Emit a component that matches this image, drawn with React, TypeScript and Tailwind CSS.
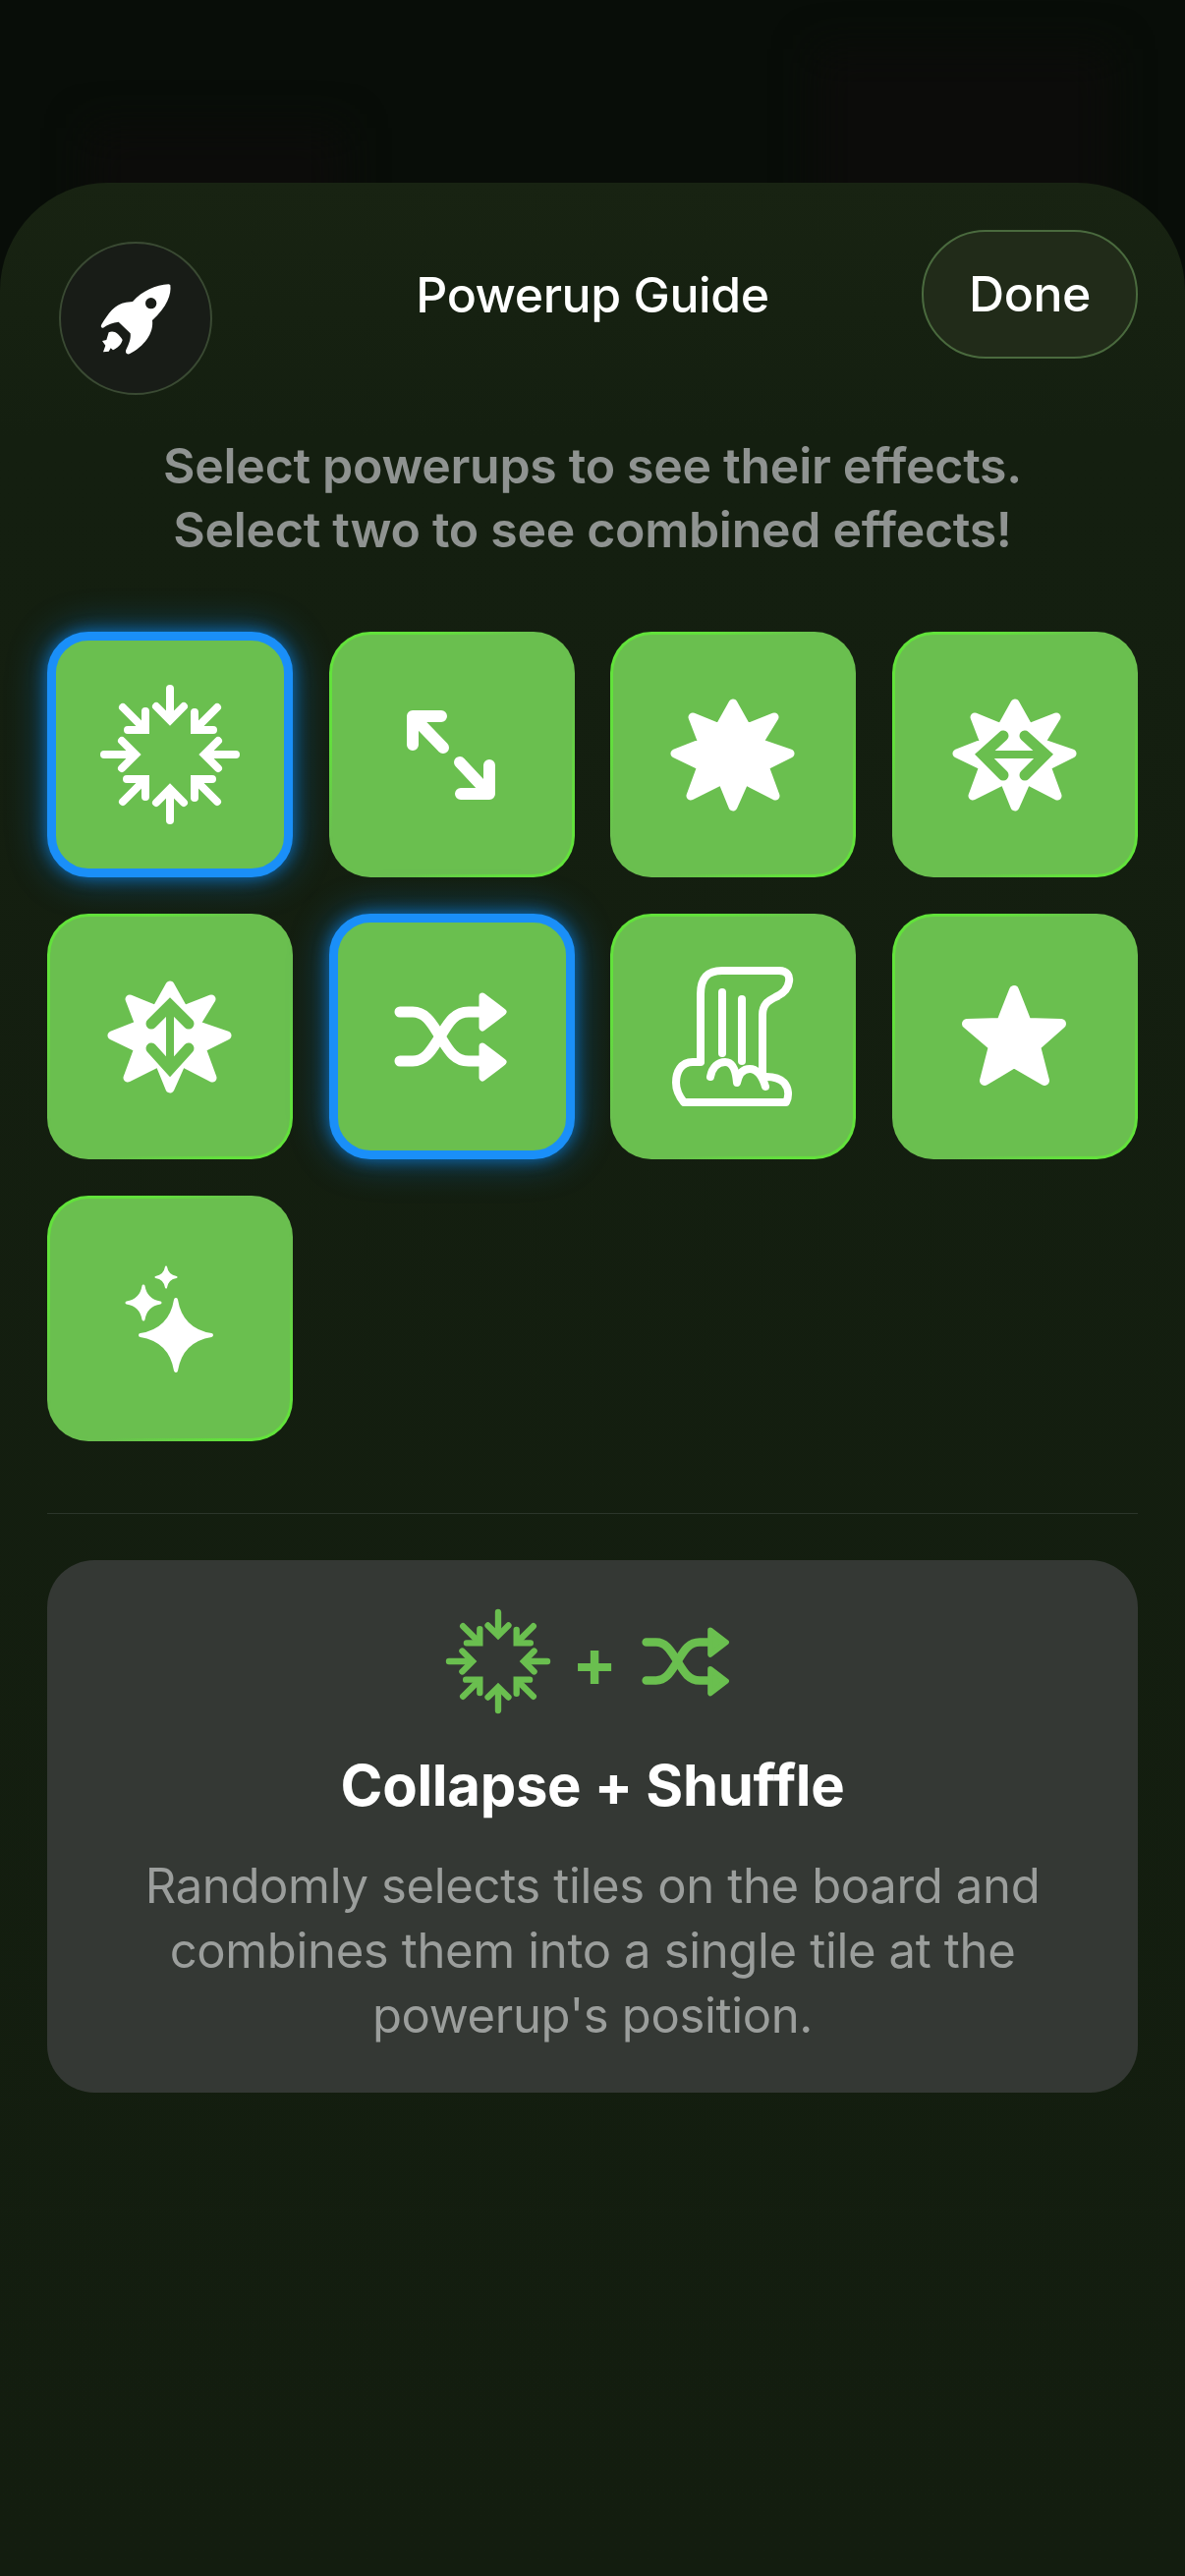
const GREEN = '#6abf4f';

function CollapseIcon({ color = 'white', viewBox = '0 0 250 250', size = 250, sw = 8 }: { color?: string; viewBox?: string; size?: number; sw?: number }) {
  return (
    <svg className="shrink-0" width={size} height={size} viewBox={viewBox} fill="none" stroke={color} strokeWidth={sw}>
      {[0, 90, 180, 270].map(a => (
        <g key={a} transform={`rotate(${a} 125 125)`}>
          <path d="M125 58V88" strokeLinecap="round" />
          <path d="M111 76L125 90L139 76" strokeLinecap="round" strokeLinejoin="miter" />
          <path d="M77 77L97 97" strokeLinecap="round" />
          <path d="M100 81V100H82" strokeLinecap="round" strokeLinejoin="miter" />
        </g>
      ))}
    </svg>
  );
}

function ExpandIcon() {
  return (
    <svg className="shrink-0" width={250} height={250} viewBox="0 0 250 250" fill="none" stroke="white" strokeWidth={12} strokeLinecap="round" strokeLinejoin="round">
      <path d="M114 86H85V115" />
      <path d="M86 87L116 118" />
      <path d="M163 136V165H134" />
      <path d="M162 164L133 133" />
    </svg>
  );
}

const STAR8 = 'M125 73L139 98L167 87L151 113L183 124L157 137L168 167L137 151L125 178L114 151L82 167L93 137L66 124L94 113L84 87L111 98Z';

function BurstIcon({ arrows }: { arrows?: 'h' | 'v' }) {
  return (
    <svg className="shrink-0" width={250} height={250} viewBox="0 0 250 250" fill="none">
      <path d={STAR8} fill="white" stroke="white" strokeWidth={9} strokeLinejoin="round" />
      {arrows === 'h' && (
        <g stroke={GREEN} strokeWidth={9} strokeLinecap="round" strokeLinejoin="miter">
          <path d="M113 106L92 125L113 146" strokeWidth={11} />
          <path d="M135 106L156 125L135 146" strokeWidth={11} />
          <path d="M94 125H154" strokeWidth={8} strokeLinecap="butt" />
        </g>
      )}
      {arrows === 'v' && (
        <g stroke={GREEN} strokeWidth={11} strokeLinecap="round" strokeLinejoin="miter">
          <path d="M106 112L125 93L144 112" />
          <path d="M106 137L125 158L144 137" />
          <path d="M125 95V156" strokeWidth={8} strokeLinecap="butt" />
        </g>
      )}
    </svg>
  );
}

function ShuffleIcon({ color = 'white', viewBox = '0 0 250 250', width = 250, height = 250 }: { color?: string; viewBox?: string; width?: number; height?: number }) {
  return (
    <svg className="shrink-0" width={width} height={height} viewBox={viewBox} fill="none" stroke={color} strokeLinecap="round">
      <path d="M72 100H85C99 100 105 113 113 125C121 138 127 150 142 150H158" strokeWidth={11} />
      <path d="M72 150H85C99 150 105 137 113 125C121 112 127 100 142 100H158" strokeWidth={11} />
      <path d="M156 84L177 100L156 116Z" fill={color} strokeWidth={7} strokeLinejoin="round" />
      <path d="M156 135L177 151L156 167Z" fill={color} strokeWidth={7} strokeLinejoin="round" />
    </svg>
  );
}

function WaterfallIcon() {
  return (
    <svg className="shrink-0" width={250} height={250} viewBox="0 0 250 250" fill="none" stroke="white" strokeWidth={8} strokeLinecap="round" strokeLinejoin="round">
      <path d="M92 150V82C92 66 98 58 114 58H172C180 58 183 63 182 69C181 78 175 82 168 85C160 89 155 93 155 103V164" />
      <path d="M114 80V142" />
      <path d="M134 87V150" />
      <path d="M92 151H84C72 151 67 161 67 172C67 180 71 187 75 192H179C182 186 182 178 177 172C172 167 166 166 159 166" />
      <path d="M102 166C104 156 110 151 117 151C125 151 128 160 129 172C131 162 136 158 142 158C150 158 155 166 158 176" />
    </svg>
  );
}

function StarIcon() {
  return (
    <svg className="shrink-0" width={250} height={250} viewBox="0 0 250 250">
      <path d="M124 78L137 111L172 112L146 135L155 170L124 152L94 170L103 135L76 112L111 111Z" fill="white" stroke="white" strokeWidth={10} strokeLinejoin="round" />
    </svg>
  );
}

function sparkle(cx: number, cy: number, r: number) {
  const c = r * 0.14;
  return `M${cx} ${cy - r}Q${cx + c} ${cy - c} ${cx + r} ${cy}Q${cx + c} ${cy + c} ${cx} ${cy + r}Q${cx - c} ${cy + c} ${cx - r} ${cy}Q${cx - c} ${cy - c} ${cx} ${cy - r}Z`;
}

function SparklesIcon() {
  return (
    <svg className="shrink-0" width={250} height={250} viewBox="0 0 250 250" fill="white" stroke="white" strokeWidth={3} strokeLinejoin="round">
      <path d={sparkle(131, 142, 36)} strokeWidth={4} />
      <path d={sparkle(98, 109, 17)} />
      <path d={sparkle(121, 83, 10.5)} strokeWidth={2} />
    </svg>
  );
}

function RocketIcon() {
  return (
    <svg className="ml-[3px] mb-[7px]" width={100} height={100} viewBox="0 0 300 300" fill="white">
      <path d="M250 57C254 85 240 125 195 165C200 205 170 245 125 268C115 270 112 262 115 255C125 235 130 220 128 205L92 170C75 172 58 178 45 188C38 190 37 183 40 178C60 145 80 115 115 110L135 108C165 75 205 57 245 55Z" />
      <path d="M62 202C78 195 92 205 104 225C100 240 88 250 75 256L68 250L62 260L45 262L52 242L42 228L55 225Z" />
      <circle cx="191" cy="113" r="17" fill="#181c17" />
    </svg>
  );
}

function Tile({ selected, children }: { selected?: boolean; children: React.ReactNode }) {
  if (selected) {
    return (
      <div className="w-[250px] h-[250px] rounded-[42px] border-[9px] border-[#1a8ff8] bg-[#6abf4f] flex items-center justify-center shadow-[0_0_16px_rgba(10,140,255,0.6),0_0_40px_rgba(10,140,255,0.45)]">
        {children}
      </div>
    );
  }
  return (
    <div className="w-[250px] h-[250px] rounded-[42px] p-[3px] bg-[linear-gradient(135deg,#62e43a_0%,#62e03c_22%,#6abf4f_42%,#6abf4f_62%,#62e03c_85%,#62e43a_100%)]">
      <div className="w-full h-full rounded-[39px] bg-[#6abf4f] flex items-center justify-center">
        {children}
      </div>
    </div>
  );
}

export default function App() {
  return (
    <div className="relative min-h-[2622px] bg-[#080d08] pt-[186px] overflow-hidden font-['Inter',sans-serif]">
      <div className="absolute left-[90px] top-[130px] w-[260px] h-[150px] bg-[#0c0c0a] blur-[20px]" />
      <div className="absolute left-[830px] top-[50px] w-[300px] h-[270px] bg-[#0c0c0a] blur-[20px]" />

      <div className="relative h-[2436px] rounded-t-[110px] bg-[linear-gradient(180deg,#182312_0px,#141f10_260px,#131d0f_100%)] px-[48px] pt-[48px]">
        {/* Header */}
        <div className="grid grid-cols-[1fr_auto_1fr] items-start">
          <div className="pl-[12px] pt-[12px]">
            <div className="w-[156px] h-[156px] rounded-full border-[2px] border-[#3a4a33] bg-[#181c17] flex items-center justify-center">
              <RocketIcon />
            </div>
          </div>
          <div className="h-[131px] pt-[2px] flex items-center text-white text-[50px] font-medium tracking-[-0.45px]">
            Powerup Guide
          </div>
          <div className="flex justify-end">
            <button className="w-[220px] h-[131px] rounded-[65px] border-[2px] border-[#4a6a3e] bg-[#212b19] text-white text-[50px] font-medium tracking-[-0.45px]">
              Done
            </button>
          </div>
        </div>

        <p className="mt-[40px] text-center text-[#8f9391] text-[50px] leading-[65px] font-semibold tracking-[-0.3px]">
          Select powerups to see their effects.
          <br />
          Select two to see combined effects!
        </p>

        {/* Powerup grid */}
        <div className="mt-[71px] grid grid-cols-[repeat(4,250px)] justify-between gap-y-[37px]">
          <Tile selected><CollapseIcon /></Tile>
          <Tile><ExpandIcon /></Tile>
          <Tile><BurstIcon /></Tile>
          <Tile><BurstIcon arrows="h" /></Tile>
          <Tile><BurstIcon arrows="v" /></Tile>
          <Tile selected><ShuffleIcon /></Tile>
          <Tile><WaterfallIcon /></Tile>
          <Tile><StarIcon /></Tile>
          <Tile><SparklesIcon /></Tile>
        </div>

        <div className="mt-[73px] h-[1px] bg-[#2b352b]" />

        {/* Combined effect card */}
        <div className="mt-[47px] rounded-[48px] bg-[#343834] pt-[47px] pb-[45px] px-[60px] text-center">
          <div className="flex items-center justify-center pr-[8px] h-[112px]">
            <CollapseIcon color={GREEN} viewBox="50 50 150 150" size={112} sw={8.5} />
            <span className="ml-[26px] mr-[32px] w-[32px] mt-[2px] flex justify-center text-[#6abf4f] text-[68px] leading-none font-bold">+</span>
            <ShuffleIcon color={GREEN} viewBox="66 74 121 102" width={94} height={80} />
          </div>
          <h2 className="mt-[36px] text-white text-[58px] leading-[68px] font-bold tracking-[-0.3px]">
            Collapse + Shuffle
          </h2>
          <p className="mt-[36px] text-[#9b9e9c] text-[49px] leading-[66px] tracking-[-0.35px]">
            Randomly selects tiles on the board and combines them into a single tile at the powerup's position.
          </p>
        </div>
      </div>
    </div>
  );
}
